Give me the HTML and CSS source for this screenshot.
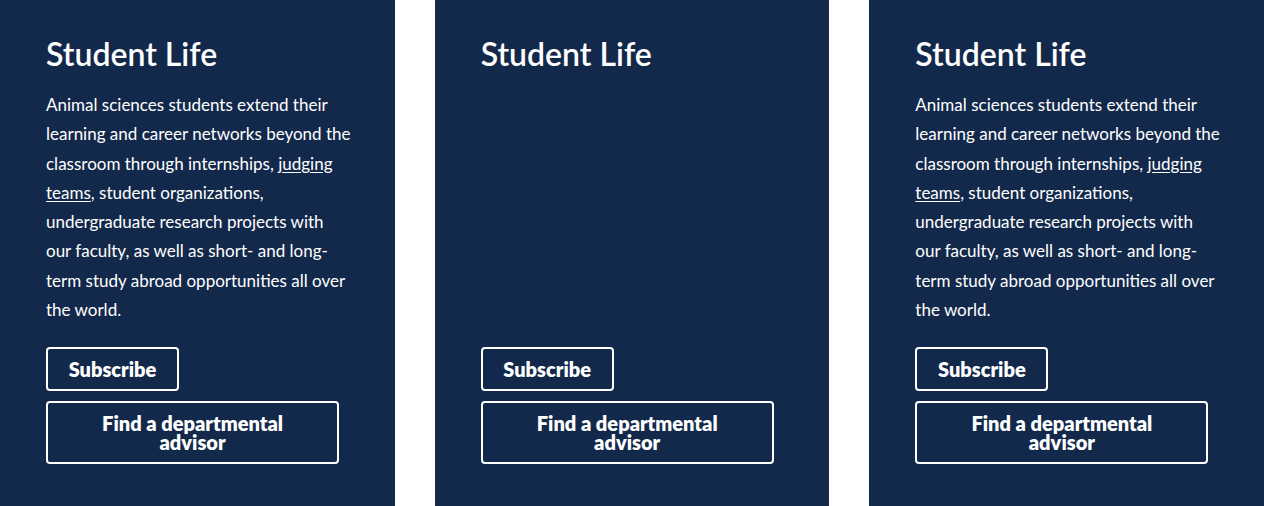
FILE: index.html
```html
<!DOCTYPE html>
<html lang="en">
<head>
<meta charset="utf-8">
<title>Student Life</title>
<link rel="stylesheet" href="styles.css">
</head>
<body>
<div class="row">
  <section class="panel">
    <h2 class="panel-title">Student Life</h2>
    <p class="panel-text">Animal sciences students extend their learning and career networks beyond the classroom through internships, <a href="#" class="panel-link">judging teams</a>, student organizations, undergraduate research projects with our faculty, as well as short- and long-term study abroad opportunities all over the world.</p>
    <div class="actions">
      <a href="#" class="btn btn-sub">Subscribe</a>
      <a href="#" class="btn btn-wide">Find a departmental advisor</a>
    </div>
  </section>
  <section class="panel">
    <h2 class="panel-title">Student Life</h2>
    <div class="actions">
      <a href="#" class="btn btn-sub">Subscribe</a>
      <a href="#" class="btn btn-wide">Find a departmental advisor</a>
    </div>
  </section>
  <section class="panel">
    <h2 class="panel-title">Student Life</h2>
    <p class="panel-text">Animal sciences students extend their learning and career networks beyond the classroom through internships, <a href="#" class="panel-link">judging teams</a>, student organizations, undergraduate research projects with our faculty, as well as short- and long-term study abroad opportunities all over the world.</p>
    <div class="actions">
      <a href="#" class="btn btn-sub">Subscribe</a>
      <a href="#" class="btn btn-wide">Find a departmental advisor</a>
    </div>
  </section>
</div>
</body>
</html>
```
FILE: styles.css
```css
html, body {
  margin: 0;
  padding: 0;
  background: #ffffff;
}
body {
  font-family: Lato, "Noto Sans", sans-serif;
  color: #ffffff;
}
.row {
  display: grid;
  grid-template-columns: repeat(3, minmax(0, 1fr));
  column-gap: 40px;
  min-height: 506px;
}
.panel {
  background: #13294b;
  display: flex;
  flex-direction: column;
  align-items: flex-start;
  padding: 35px 46px 42px 46px;
  min-height: 506px;
  box-sizing: border-box;
  min-width: 0;
}
.panel-title {
  margin: 0;
  font-size: 32px;
  line-height: 38px;
  font-weight: 600;
  letter-spacing: 0;
}
.panel-text {
  margin: 17px 0 0 0;
  font-size: 17px;
  line-height: 29.25px;
  width: 305px;
}
.panel-link {
  color: #ffffff;
  text-decoration: underline;
  text-underline-offset: 2px;
}
.actions {
  margin-top: auto;
  display: flex;
  flex-direction: column;
  align-items: flex-start;
  gap: 10px;
}
.btn {
  display: flex;
  align-items: center;
  justify-content: center;
  box-sizing: border-box;
  border: 2px solid #ffffff;
  border-radius: 4px;
  color: #ffffff;
  text-decoration: none;
  font-weight: 800;
  font-size: 20px;
  line-height: 19px;
  text-align: center;
}
.btn-sub {
  width: 133px;
  height: 44px;
}
.btn-wide {
  width: 293px;
  height: 63px;
  padding: 0 40px;
}
```
